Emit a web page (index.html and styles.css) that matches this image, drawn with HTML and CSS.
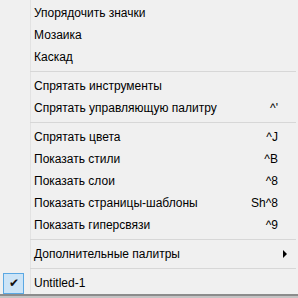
FILE: index.html
```html
<!DOCTYPE html>
<html lang="ru">
<head>
    <meta charset="UTF-8">
    <meta name="viewport" content="width=device-width, initial-scale=1.0">
    <link rel="stylesheet" href="styles.css">
</head>
<body>
    <!-- Window menu -->
    <div class="menu">
        <div class="item"><span class="label">Упорядочить значки</span></div>
        <div class="item"><span class="label">Мозаика</span></div>
        <div class="item"><span class="label">Каскад</span></div>
        <div class="sep"></div>
        <div class="item"><span class="label">Спрятать инструменты</span></div>
        <div class="item"><span class="label">Спрятать управляющую палитру</span><span class="key">^'</span></div>
        <div class="sep"></div>
        <div class="item"><span class="label">Спрятать цвета</span><span class="key">^J</span></div>
        <div class="item"><span class="label">Показать стили</span><span class="key">^B</span></div>
        <div class="item"><span class="label">Показать слои</span><span class="key">^8</span></div>
        <div class="item"><span class="label">Показать страницы-шаблоны</span><span class="key">Sh^8</span></div>
        <div class="item"><span class="label">Показать гиперсвязи</span><span class="key">^9</span></div>
        <div class="sep"></div>
        <div class="item"><span class="label">Дополнительные палитры</span><span class="submenu"></span></div>
        <div class="sep"></div>
        <div class="item checked"><span class="check">✔</span><span class="label">Untitled-1</span></div>
    </div>
</body>
</html>
```

FILE: styles.css
```css
body {
    margin: 0;
    padding: 0;
    background-color: #c4c4c4;
    font-family: "Liberation Sans", Arial, sans-serif;
    font-size: 12px;
    color: #000;
}

/* Menu */
.menu {
    background-color: #f0f0f0;
    background-image: linear-gradient(to right, transparent 30px, #e2e2e2 30px, #e2e2e2 31px, transparent 31px);
    padding-top: 2px;
    border-bottom: 2px solid #8c8c8c;
}

.item {
    display: grid;
    grid-template-columns: 34px 1fr auto;
    align-items: center;
    height: 22px;
    padding-right: 20px;
}

.item .label {
    grid-column: 2;
    white-space: nowrap;
}

.item .key {
    grid-column: 3;
}

.submenu {
    grid-column: 3;
    width: 0;
    height: 0;
    margin-left: 5px;
    margin-right: -9px;
    border-left: 4px solid #000;
    border-top: 4px solid transparent;
    border-bottom: 4px solid transparent;
}

.sep {
    height: 1px;
    margin: 3px 2px 3px 30px;
    background-color: #d7d7d7;
}

/* Checked window */
.check {
    grid-column: 1;
    grid-row: 1;
    box-sizing: border-box;
    width: 21px;
    height: 21px;
    margin-left: 3px;
    background-color: #cce4f7;
    border: 1px solid #5ba8e3;
    font-size: 12px;
    line-height: 19px;
    text-align: center;
    color: #111;
}
```
